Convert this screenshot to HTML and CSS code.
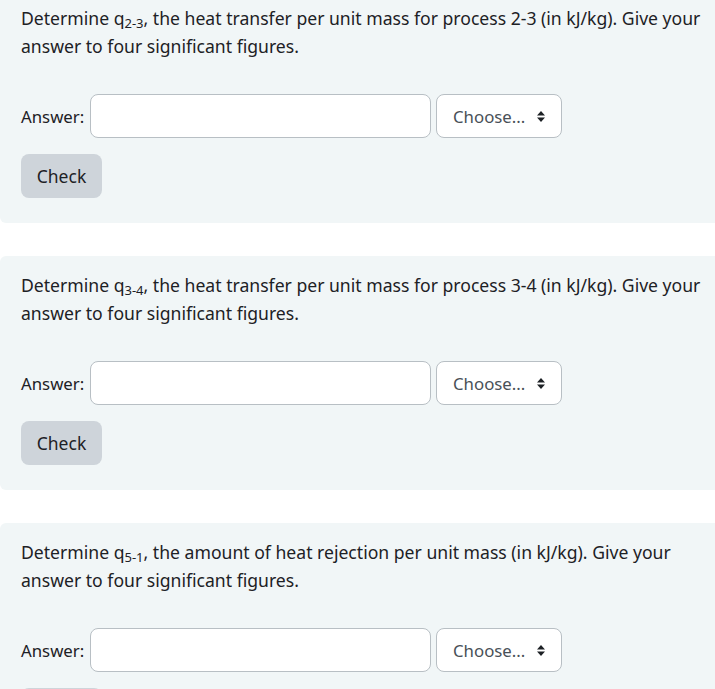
FILE: index.html
```html
<!DOCTYPE html>
<html>
<head>
<meta charset="utf-8">
<link rel="stylesheet" href="styles.css">
</head>
<body>
<div class="questions">
  <div class="que">
    <p class="qtext">Determine q<sub>2-3</sub>, the heat transfer per unit mass for process 2-3 (in kJ/kg). Give your answer to four significant figures.</p>
    <div class="answer-row">
      <label class="answer-label">Answer:</label>
      <input class="answer-input" type="text">
      <div class="select"><span>Choose...</span><svg class="caret" width="10" height="13" viewBox="0 0 10 13"><path d="M1 5.5 L5 1 L9 5.5 Z M1 7.5 L5 12 L9 7.5 Z" fill="#1d2125"/></svg></div>
    </div>
    <button class="check">Check</button>
  </div>
  <div class="que">
    <p class="qtext">Determine q<sub>3-4</sub>, the heat transfer per unit mass for process 3-4 (in kJ/kg). Give your answer to four significant figures.</p>
    <div class="answer-row">
      <label class="answer-label">Answer:</label>
      <input class="answer-input" type="text">
      <div class="select"><span>Choose...</span><svg class="caret" width="10" height="13" viewBox="0 0 10 13"><path d="M1 5.5 L5 1 L9 5.5 Z M1 7.5 L5 12 L9 7.5 Z" fill="#1d2125"/></svg></div>
    </div>
    <button class="check">Check</button>
  </div>
  <div class="que">
    <p class="qtext">Determine q<sub>5-1</sub>, the amount of heat rejection per unit mass (in kJ/kg). Give your answer to four significant figures.</p>
    <div class="answer-row">
      <label class="answer-label">Answer:</label>
      <input class="answer-input" type="text">
      <div class="select"><span>Choose...</span><svg class="caret" width="10" height="13" viewBox="0 0 10 13"><path d="M1 5.5 L5 1 L9 5.5 Z M1 7.5 L5 12 L9 7.5 Z" fill="#1d2125"/></svg></div>
    </div>
    <button class="check">Check</button>
  </div>
</div>
</body>
</html>
```
FILE: styles.css
```css
html, body {
  margin: 0;
  padding: 0;
  background: #ffffff;
  overflow: hidden;
}
body {
  font-family: "Noto Sans", "Open Sans", sans-serif;
  font-size: 16.8px;
  color: #1d2125;
}
.questions {
  display: flex;
  flex-direction: column;
  gap: 33px;
  margin-top: -11px;
  margin-right: -12px;
}
.que {
  background: #f1f6f7;
  border-radius: 6px;
  padding: 15px 21px 25px 21px;
  display: flex;
  flex-direction: column;
  align-items: flex-start;
}
.qtext {
  margin: 0;
  font-size: 17.6px;
  line-height: 28px;
  max-width: 684px;
}
.qtext sub {
  font-size: 13px;
  vertical-align: -3px;
  line-height: 0;
}
.answer-row {
  display: flex;
  align-items: center;
  margin-top: 34px;
}
.answer-label {
  width: 69px;
}
.answer-input {
  box-sizing: border-box;
  width: 341px;
  height: 44px;
  border: 1px solid #b8bfc4;
  border-radius: 8px;
  background: #fff;
  margin: 0 5px 0 0;
}
.select {
  box-sizing: border-box;
  width: 126px;
  height: 44px;
  border: 1px solid #b8bfc4;
  border-radius: 8px;
  background: #fff;
  display: flex;
  align-items: center;
  justify-content: space-between;
  padding: 0 15px 0 16px;
  color: #495057;
}
.check {
  margin-top: 16px;
  height: 44px;
  width: 81px;
  border: none;
  border-radius: 8px;
  background: #ced4da;
  color: #1d2125;
  font-family: inherit;
  font-size: 17.5px;
  padding: 0;
}
```
